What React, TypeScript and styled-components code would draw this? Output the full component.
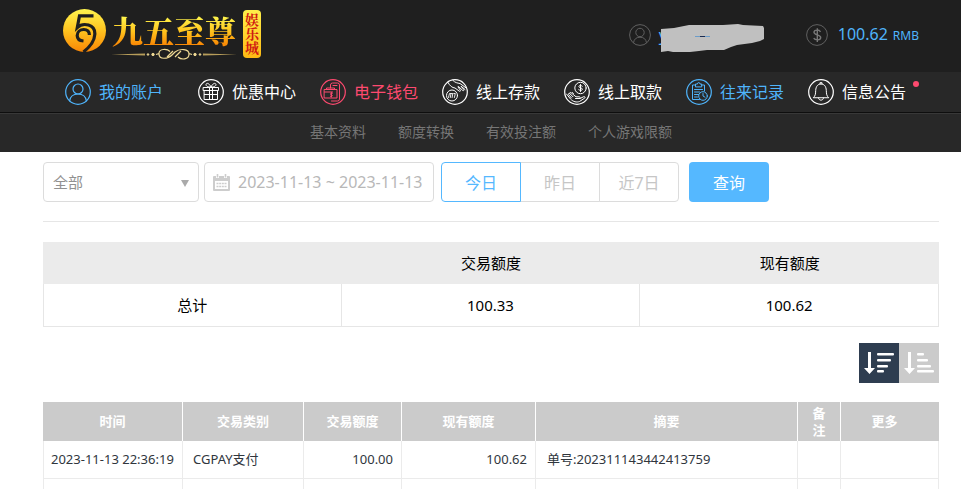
import React from "react";
import styled, { createGlobalStyle, css } from "styled-components";

const BLUE = "#4fb4fb";
const PINK = "#fd4a6f";

const GlobalStyle = createGlobalStyle`
  *, *::before, *::after { box-sizing: border-box; }
  body {
    margin: 0;
    background: #fff;
    color: #000;
    font-family: "Noto Sans", "Noto Sans CJK SC", sans-serif;
  }
  button, input, select { font-family: inherit; }
`;

const gutters = css`
  padding-left: 43px;
  padding-right: 22px;
`;

/* ---------- header ---------- */

const Header = styled.header`
  ${gutters}
  display: flex;
  align-items: flex-start;
  justify-content: space-between;
  height: 72px;
  background: #1f1f1f;
`;

const Logo = styled.a`
  display: flex;
  align-items: flex-start;
  margin-left: 20px;
  padding-top: 9px;
  text-decoration: none;
`;

const Wordmark = styled.span`
  display: flex;
  flex-direction: column;
  align-items: center;
  margin-left: 4px;
  padding-top: 3px;
`;

const BrandName = styled.span`
  font-family: "Noto Serif CJK SC", "Noto Sans CJK SC", serif;
  font-size: 31px;
  font-weight: 900;
  line-height: 36px;
  color: transparent;
  background: linear-gradient(#fff34a 15%, #ffc21c 55%, #f98a06 90%);
  background-clip: text;
  -webkit-background-clip: text;
`;

const Badge = styled.span`
  display: flex;
  align-items: center;
  justify-content: center;
  width: 18px;
  height: 48px;
  margin: 1px 0 0 6px;
  border-radius: 4px;
  background: linear-gradient(#fff04a, #fdb913);
  color: #cf1a12;
  font-family: "Noto Serif CJK SC", "Noto Sans CJK SC", serif;
  font-size: 14px;
  font-weight: 700;
  line-height: 18px;
  writing-mode: vertical-rl;
`;

const Account = styled.div`
  display: flex;
  align-items: center;
  gap: 44px;
  height: 70px;
  padding-right: 20px;
`;

const AccountItem = styled.div`
  display: flex;
  align-items: center;
  gap: 10px;
  color: ${BLUE};
  font-size: 16px;
  line-height: 24px;
`;

const AccountIcon = styled.svg`
  width: 22px;
  height: 22px;
  fill: none;
  stroke: #606060;
`;

const UserName = styled.span`
  position: relative;
  width: 103px;
  height: 24px;
  margin-left: -2px;
`;

const Scribble = styled.svg`
  position: absolute;
  left: 0;
  top: -1px;
  width: 106px;
  height: 30px;
`;

const Currency = styled.small`
  font-size: 12px;
  margin-left: 5px;
`;

/* ---------- navigation ---------- */

const Nav = styled.nav`
  ${gutters}
  display: flex;
  justify-content: center;
  gap: 24px;
  height: 40px;
  background: #282828;
`;

const NavLink = styled.a<{ $tone?: string; $wide?: boolean }>`
  position: relative;
  display: flex;
  align-items: center;
  gap: 8px;
  margin-right: ${(p) => (p.$wide ? 11 : 0)}px;
  color: ${(p) => p.$tone ?? "#fff"};
  font-size: 16px;
  line-height: 24px;
  white-space: nowrap;
  text-decoration: none;

  &:last-child { margin-right: 11px; }
`;

const NavIcon = styled.svg`
  width: 26px;
  height: 26px;
  fill: none;
  stroke: currentColor;
  stroke-width: 1;
  stroke-linecap: round;
  stroke-linejoin: round;
`;

const Dot = styled.i`
  position: absolute;
  right: -13px;
  top: 9px;
  width: 6px;
  height: 6px;
  border-radius: 50%;
  background: ${PINK};
`;

const SubNav = styled.nav`
  ${gutters}
  display: flex;
  align-items: center;
  justify-content: center;
  gap: 32px;
  height: 40px;
  padding-bottom: 2px;
  border-top: 1px solid #0e0e0e;
  box-shadow: inset 0 1px #383838;
  background: #282828;
`;

const SubLink = styled.a`
  color: #767676;
  font-size: 14px;
  line-height: 20px;
  text-decoration: none;
`;

/* ---------- filters ---------- */

const Main = styled.main`
  ${gutters}
  padding-top: 10px;
`;

const Filters = styled.form`
  display: flex;
  align-items: center;
  height: 60px;
  padding-bottom: 19px;
  border-bottom: 1px solid #e6e6e6;
`;

const field = css`
  height: 40px;
  border: 1px solid #dcdcdc;
  border-radius: 4px;
  background: #fff;
`;

const SelectBox = styled.label`
  position: relative;
  width: 156px;
  margin-right: 5px;
`;

const Select = styled.select`
  ${field}
  width: 100%;
  padding: 0 9px;
  appearance: none;
  color: #919191;
  font-size: 15px;
`;

const Caret = styled.svg`
  position: absolute;
  right: 10px;
  top: 18px;
  width: 8px;
  height: 7px;
  fill: #aaa;
  pointer-events: none;
`;

const DateBox = styled.label`
  ${field}
  display: flex;
  align-items: center;
  gap: 8px;
  width: 230px;
  margin-right: 7px;
  padding-left: 8px;
`;

const CalendarIcon = styled.svg`
  flex: none;
  width: 17px;
  height: 17px;
`;

const DateInput = styled.input`
  min-width: 0;
  flex: 1;
  padding: 0;
  border: 0;
  outline: 0;
  background: none;
  color: #b8b8b8;
  font-size: 16px;
`;

const Ranges = styled.div`
  display: flex;
  margin-right: 10px;
`;

const RangeButton = styled.button<{ $active?: boolean }>`
  width: 80px;
  height: 40px;
  padding: 0;
  border: 1px solid ${(p) => (p.$active ? "#55b8ff" : "#dcdcdc")};
  background: #fff;
  color: ${(p) => (p.$active ? "#55b8ff" : "#c6c6c6")};
  font-size: 16px;
  z-index: ${(p) => (p.$active ? 1 : 0)};

  & + & { margin-left: -1px; }
  &:first-child { border-radius: 4px 0 0 4px; }
  &:last-child { border-radius: 0 4px 4px 0; }
`;

const QueryButton = styled.button`
  width: 80px;
  height: 40px;
  padding: 0;
  border: 0;
  border-radius: 4px;
  background: #55b8ff;
  color: #fff;
  font-size: 16px;
`;

/* ---------- tables ---------- */

const SummaryTable = styled.table`
  width: 100%;
  margin-top: 20px;
  border-collapse: separate;
  border-spacing: 0;
  table-layout: fixed;
  font-size: 15px;
  line-height: 20px;
  text-align: center;

  th { height: 42px; padding: 0; background: #ebebeb; font-weight: 400; }
  td {
    height: 43px;
    padding: 0;
    border-right: 1px solid #e6e6e6;
    border-bottom: 1px solid #e6e6e6;
  }
  td:first-child { border-left: 1px solid #e6e6e6; }
`;

const SortBar = styled.div`
  display: flex;
  justify-content: flex-end;
  margin: 16px 0 19px;
`;

const SortButton = styled.button<{ $active?: boolean }>`
  width: 40px;
  height: 40px;
  padding: 0;
  border: 0;
  background: ${(p) => (p.$active ? "#2e3d50" : "#cbcbcb")};

  svg { display: block; width: 40px; height: 40px; }
`;

const RecordTable = styled.table`
  width: 100%;
  border-collapse: separate;
  border-spacing: 0;
  table-layout: fixed;
  color: #30363d;
  font-size: 13px;
  line-height: 17px;

  th {
    height: 39px;
    padding: 0 14px;
    border-right: 1px solid #fff;
    background: #cbcbcb;
    color: #fff;
    font-weight: 700;
  }
  th:last-child { padding-right: 24px; border-right-color: #cbcbcb; }
  td {
    height: 38px;
    border-right: 1px solid #ebebeb;
    border-bottom: 1px solid #ebebeb;
  }
  td:first-child { border-left: 1px solid #ebebeb; }
  tbody tr:last-child td { height: 10px; border-bottom: 0; }
`;

const Col = styled.col<{ $share: number }>`
  width: ${(p) => (p.$share / 896) * 100}%;
`;

const Cell = styled.td<{ $align?: string; $pad?: number }>`
  padding: 0 ${(p) => (p.$align ? 8 : 0)}px 0 ${(p) => p.$pad ?? 0}px;
  text-align: ${(p) => p.$align ?? "left"};
  white-space: nowrap;
`;

/* ---------- icons ---------- */

const Ring = () => <circle cx="13" cy="13" r="12.300" strokeWidth="1.200" />;

const iconUser = (
  <>
    <circle cx="13" cy="10" r="5" strokeWidth="1.200" />
    <path d="M4.600 22c.6-4.300 3.500-7 8.400-7s7.800 2.700 8.400 7" strokeWidth="1.200" />
  </>
);
const iconGift = (
  <>
    <path d="M5.500 8.500h15v3h-15zM6.500 11.500h13v9h-13zM11.500 8.500v12M14.500 8.500v12M6.500 15.500h13" />
    <path d="M12.500 8C9 8 7.500 6.500 8.200 5c1-1.600 3.500 0 4.800 3 1.300-3 3.800-4.600 4.800-3 .7 1.500-.8 3-4.300 3" />
  </>
);
const iconWallet = (
  <>
    <path d="M10.500 9V6q0-2 2-2h5q2 0 2 2v14q0 2-2 2h-6M13 6.500h4M4.500 10.500h12.500v8.500H4.500zM4.500 13h8M6.500 10.500V9h8v1.500" />
    <path d="M12.300 14.200c-2-.7-2.400 1.400-.9 1.700 1.700.3 1 2.100-1 1.400M11.400 13.600v4.500" />
  </>
);
const iconDeposit = (
  <>
    <circle cx="10" cy="16.500" r="5.500" />
    <path d="M6.500 18.500l1-4h1.500l-.7 4M9.300 14.500h1.500l-.7 4M11.800 14.500h1.500l-.9 4" strokeWidth="0.900" />
    <path d="M6 3.500c2 3.600 4.200 5.200 7 5.500l4.300 3.200c.9.500 1.500-.3 1-1L16 8" />
    <path d="M11 1.500c2 2.200 4.500 2.600 7 3l5.800 4.200M16.500 7.500l4.300 4c.9.500 1.500-.3 1-1L19 7.200l4 3.300" />
  </>
);
const iconWithdraw = (
  <>
    <circle cx="16.500" cy="9" r="5.700" />
    <path d="M18.300 7.200c-1.400-1.300-3.600-.8-3.400.6.300 1.300 3.300.8 3.500 2.300.1 1.500-2.400 1.800-3.700.5M16.500 5.500v7" />
    <path d="M2.500 15l4 5c3 3 6 3.500 9 2.500l5.200-3.400c.8-.8.100-1.800-1-1.400L16 19.500h-4.500M16 19.300c.6-.8 0-1.500-1-1.500h-3L7 13.700c-1-.6-1.700.2-1.100 1L9 17.800M9.500 14.500l-1-1M5.900 14.700c-1-.7-1.800 0-1.400.8L7.500 19" />
  </>
);
const iconRecords = (
  <>
    <path d="M13.500 20.500H6.500V6h3M15.500 6h3v6M9.500 7.500V5h2q0-1.500 1.200-1.500T14 5h1.700v2.500zM8.500 10.500h8M8.500 13h5M8.500 15.500h4M8.500 18h3" />
    <circle cx="17" cy="17" r="4.300" />
    <path d="M17 14.500V17l2 1.200" />
  </>
);
const iconBell = (
  <>
    <path d="M5.500 18.500c2-1.600 2-3.500 2.200-7 .2-4 2-6.500 5.300-6.500s5.100 2.500 5.300 6.500c.2 3.500.2 5.400 2.200 7zM12 5V3.700h2V5" />
    <path d="M10.500 19c.2 3 4.800 3 5 0" />
  </>
);

const navItems = [
  { label: "我的账户", icon: iconUser, tone: BLUE, wide: true },
  { label: "优惠中心", icon: iconGift },
  { label: "电子钱包", icon: iconWallet, tone: PINK },
  { label: "线上存款", icon: iconDeposit },
  { label: "线上取款", icon: iconWithdraw },
  { label: "往来记录", icon: iconRecords, tone: BLUE },
  { label: "信息公告", icon: iconBell, dot: true },
];

const subItems = ["基本资料", "额度转换", "有效投注额", "个人游戏限额"];
const columns: [string, number][] = [
  ["时间", 140],
  ["交易类别", 121],
  ["交易额度", 98],
  ["现有额度", 134],
  ["摘要", 262],
  ["备注", 43],
  ["更多", 98],
];

const Emblem = () => (
  <svg width="44" height="44" viewBox="0 0 44 44" aria-hidden="true">
    <defs>
      <linearGradient id="gold" x1="0" y1="0" x2="0" y2="1">
        <stop offset="0" stopColor="#fff54f" />
        <stop offset="0.500" stopColor="#ffc31f" />
        <stop offset="1" stopColor="#f98605" />
      </linearGradient>
    </defs>
    <circle cx="21.500" cy="21.500" r="21.500" fill="url(#gold)" />
    <g fill="none" stroke="#1f1f1f" strokeWidth="3.200">
      <path d="M30.500 6.800H16.500L14.300 18.500C20 13.200 32.500 15 31.800 25.500c-.4 7-5 12.500-11.300 17.500" />
      <path d="M20.500 32c-4-.4-6.300-2.600-6.300-5.600 0-3.600 3-5.900 6.600-5.900 3.400 0 5.600 2.200 5.600 5.500" />
    </g>
  </svg>
);

const Ornament = () => (
  <svg width="126" height="12" viewBox="0 0 126 12" fill="none" stroke="#efd994" aria-hidden="true">
    <path d="M0 6.500l34-1v2zM126 6.500l-34-1v2z" fill="#b79d5a" stroke="none" />
    <circle cx="37" cy="6.500" r="0.800" fill="#efd994" />
    <circle cx="42" cy="6.500" r="1.200" fill="#efd994" />
    <circle cx="84" cy="6.500" r="1.200" fill="#efd994" />
    <circle cx="89" cy="6.500" r="0.800" fill="#efd994" />
    <path d="M45 6.500l3-1c0-5 8-5 11-2M48 6c0 6 9 5 13 1l3-3c5-4 14-3 14 2 0 6-8 6-11 3M81 6.500l-3-1M56 9l6-6M64 9l6-6" strokeWidth="1.200" />
  </svg>
);

const SortGlyph = ({ bars }: { bars: number[] }) => (
  <svg viewBox="0 0 40 40" aria-hidden="true">
    <path d="M9 9h3v16h4l-5.500 6L5 25h4z" fill="#fff" />
    {bars.map((w, i) => (
      <rect key={i} x="18" y={10 + i * 6 - (i > 2 ? 1 : 0)} width={w} height="2.600" rx="1" fill="#fff" />
    ))}
  </svg>
);

export default function App() {
  return (
    <>
      <GlobalStyle />
      <Header>
        <Logo href="#">
          <Emblem />
          <Wordmark>
            <BrandName>九五至尊</BrandName>
            <Ornament />
          </Wordmark>
          <Badge>娱乐城</Badge>
        </Logo>
        <Account>
          <AccountItem>
            <AccountIcon viewBox="0 0 22 22" aria-hidden="true">
              <circle cx="11" cy="11" r="10.400" />
              <circle cx="11" cy="8.500" r="4.200" />
              <path d="M4.500 18.800c.5-3.700 2.800-5.600 6.500-5.600s6 1.900 6.500 5.600" />
            </AccountIcon>
            <UserName>
              y
              <Scribble viewBox="0 0 106 30" aria-hidden="true">
                <path d="M2 7l13-1 15-3h34l15-1 5 1 20 1 1 2v11l-4 2-8 2-15 2-6 2-7 3H48l-8 1-9 1H14l-5-1-7 1z" fill="#c0c0c0" />
                <path d="M36 14.500h15" stroke="#6c9cc8" />
                <path d="M41 14.500h5" stroke="#1b2b50" />
              </Scribble>
            </UserName>
          </AccountItem>
          <AccountItem>
            <AccountIcon viewBox="0 0 22 22" aria-hidden="true">
              <circle cx="11" cy="11" r="10.400" />
              <path d="M14.500 7.800C13 5.300 8 5.600 8 8.200c0 3.200 6.700 2 6.700 5.300 0 3-5.400 3.200-7 .6M11.300 4.200v13.800" stroke="#777" strokeWidth="1.400" />
            </AccountIcon>
            <span>
              100.62<Currency>RMB</Currency>
            </span>
          </AccountItem>
        </Account>
      </Header>

      <Nav>
        {navItems.map((n) => (
          <NavLink key={n.label} href="#" $tone={n.tone} $wide={n.wide}>
            <NavIcon viewBox="0 0 26 26" aria-hidden="true">
              <Ring />
              {n.icon}
            </NavIcon>
            {n.label}
            {n.dot && <Dot />}
          </NavLink>
        ))}
      </Nav>
      <SubNav>
        {subItems.map((s) => (
          <SubLink key={s} href="#">{s}</SubLink>
        ))}
      </SubNav>

      <Main>
        <Filters onSubmit={(e) => e.preventDefault()}>
          <SelectBox>
            <Select aria-label="交易类别">
              <option>全部</option>
            </Select>
            <Caret viewBox="0 0 8 7" aria-hidden="true">
              <path d="M0 0h8L4 7z" />
            </Caret>
          </SelectBox>
          <DateBox>
            <CalendarIcon viewBox="0 0 17 17" aria-hidden="true">
              <path d="M0 3q0-1 1-1h2v2h3V2h5v2h3V2h2q1 0 1 1v13q0 1-1 1H1q-1 0-1-1z" fill="#cdcdcd" />
              <path d="M4.500 0v3.500M12.500 0v3.500" stroke="#cdcdcd" strokeWidth="1.600" />
              <path d="M2 7h13v8H2z" fill="#fff" />
              <path d="M3.500 9.500h10M3.500 12.500h10" stroke="#cdcdcd" strokeWidth="1.600" strokeDasharray="2 0.667" />
            </CalendarIcon>
            <DateInput aria-label="时间" defaultValue="2023-11-13 ~ 2023-11-13" />
          </DateBox>
          <Ranges>
            <RangeButton type="button" $active>今日</RangeButton>
            <RangeButton type="button">昨日</RangeButton>
            <RangeButton type="button">近7日</RangeButton>
          </Ranges>
          <QueryButton type="submit">查询</QueryButton>
        </Filters>

        <SummaryTable>
          <thead>
            <tr>
              <th />
              <th scope="col">交易额度</th>
              <th scope="col">现有额度</th>
            </tr>
          </thead>
          <tbody>
            <tr>
              <td>总计</td>
              <td>100.33</td>
              <td>100.62</td>
            </tr>
          </tbody>
        </SummaryTable>

        <SortBar>
          <SortButton type="button" $active aria-label="降序">
            <SortGlyph bars={[17, 14, 11, 7]} />
          </SortButton>
          <SortButton type="button" aria-label="升序">
            <SortGlyph bars={[7, 11, 14, 17]} />
          </SortButton>
        </SortBar>

        <RecordTable>
          <colgroup>
            {columns.map(([name, share]) => (
              <Col key={name} $share={share} />
            ))}
          </colgroup>
          <thead>
            <tr>
              {columns.map(([name]) => (
                <th key={name} scope="col">{name}</th>
              ))}
            </tr>
          </thead>
          <tbody>
            <tr>
              <Cell $pad={7}>2023-11-13 22:36:19</Cell>
              <Cell $pad={10}>CGPAY支付</Cell>
              <Cell $align="right">100.00</Cell>
              <Cell $align="right">100.62</Cell>
              <Cell $pad={11}>单号:202311143442413759</Cell>
              <Cell />
              <Cell />
            </tr>
            <tr>
              {columns.map(([name]) => (
                <Cell key={name} />
              ))}
            </tr>
          </tbody>
        </RecordTable>
      </Main>
    </>
  );
}
